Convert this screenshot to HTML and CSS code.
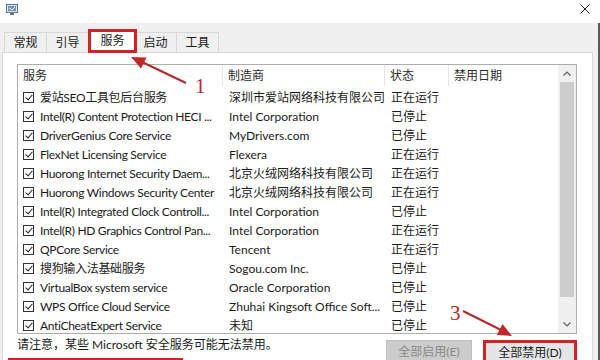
FILE: index.html
```html
<!DOCTYPE html>
<html lang="zh-CN">
<head>
<meta charset="utf-8">
<title>系统配置</title>
<link rel="stylesheet" href="styles.css">
</head>
<body>
<div class="window">
  <div class="titlebar">
    <svg class="appicon" width="12" height="11" viewBox="0 0 12 11">
      <rect x="0.5" y="0.5" width="11" height="8" fill="#dfe8f2" stroke="#5d7894"/>
      <rect x="2" y="2" width="8" height="5" fill="#6f93bd"/>
      <path d="M3 4 L6 6 L9 3" stroke="#ffffff" stroke-width="1" fill="none"/>
      <rect x="4" y="9" width="4" height="2" fill="#5d7894"/>
    </svg>
    <svg class="close" width="10" height="10" viewBox="0 0 10 10">
      <path d="M0.5 0.5 L9.5 9.5 M9.5 0.5 L0.5 9.5" stroke="#222" stroke-width="1"/>
    </svg>
  </div>
  <div class="frame">
    <div class="dialog">
      <div class="tabs">
        <div class="tab">常规</div>
        <div class="tab">引导</div>
        <div class="tab selected">服务</div>
        <div class="tab">启动</div>
        <div class="tab">工具</div>
      </div>
      <div class="panel">
        <div class="listview">
          <div class="lv-main">
            <div class="lv-head">
              <div class="col c1">服务</div>
              <div class="col c2">制造商</div>
              <div class="col c3">状态</div>
              <div class="col c4">禁用日期</div>
            </div>
            <div class="lv-body">
              <div class="row"><div class="cell c1"><span class="cb"></span><span class="txt">爱站SEO工具包后台服务</span></div><div class="cell c2">深圳市爱站网络科技有限公司</div><div class="cell c3">正在运行</div><div class="cell c4"></div></div>
              <div class="row"><div class="cell c1"><span class="cb"></span><span class="txt">Intel(R) Content Protection HECI ...</span></div><div class="cell c2">Intel Corporation</div><div class="cell c3">已停止</div><div class="cell c4"></div></div>
              <div class="row"><div class="cell c1"><span class="cb"></span><span class="txt">DriverGenius Core Service</span></div><div class="cell c2">MyDrivers.com</div><div class="cell c3">已停止</div><div class="cell c4"></div></div>
              <div class="row"><div class="cell c1"><span class="cb"></span><span class="txt">FlexNet Licensing Service</span></div><div class="cell c2">Flexera</div><div class="cell c3">正在运行</div><div class="cell c4"></div></div>
              <div class="row"><div class="cell c1"><span class="cb"></span><span class="txt">Huorong Internet Security Daem...</span></div><div class="cell c2">北京火绒网络科技有限公司</div><div class="cell c3">正在运行</div><div class="cell c4"></div></div>
              <div class="row"><div class="cell c1"><span class="cb"></span><span class="txt">Huorong Windows Security Center</span></div><div class="cell c2">北京火绒网络科技有限公司</div><div class="cell c3">正在运行</div><div class="cell c4"></div></div>
              <div class="row"><div class="cell c1"><span class="cb"></span><span class="txt">Intel(R) Integrated Clock Controll...</span></div><div class="cell c2">Intel Corporation</div><div class="cell c3">已停止</div><div class="cell c4"></div></div>
              <div class="row"><div class="cell c1"><span class="cb"></span><span class="txt">Intel(R) HD Graphics Control Pan...</span></div><div class="cell c2">Intel Corporation</div><div class="cell c3">正在运行</div><div class="cell c4"></div></div>
              <div class="row"><div class="cell c1"><span class="cb"></span><span class="txt">QPCore Service</span></div><div class="cell c2">Tencent</div><div class="cell c3">正在运行</div><div class="cell c4"></div></div>
              <div class="row"><div class="cell c1"><span class="cb"></span><span class="txt">搜狗输入法基础服务</span></div><div class="cell c2">Sogou.com Inc.</div><div class="cell c3">已停止</div><div class="cell c4"></div></div>
              <div class="row"><div class="cell c1"><span class="cb"></span><span class="txt">VirtualBox system service</span></div><div class="cell c2">Oracle Corporation</div><div class="cell c3">已停止</div><div class="cell c4"></div></div>
              <div class="row"><div class="cell c1"><span class="cb"></span><span class="txt">WPS Office Cloud Service</span></div><div class="cell c2">Zhuhai Kingsoft Office Soft...</div><div class="cell c3">已停止</div><div class="cell c4"></div></div>
              <div class="row"><div class="cell c1"><span class="cb"></span><span class="txt">AntiCheatExpert Service</span></div><div class="cell c2">未知</div><div class="cell c3">已停止</div><div class="cell c4"></div></div>
            </div>
          </div>
          <div class="scrollbar">
            <div class="sb-btn"><svg width="8" height="5" viewBox="0 0 8 5"><path d="M0.5 4.5 L4 1 L7.5 4.5" stroke="#606060" stroke-width="1.2" fill="none"/></svg></div>
            <div class="sb-track"><div class="sb-thumb"></div></div>
            <div class="sb-btn"><svg width="8" height="5" viewBox="0 0 8 5"><path d="M0.5 0.5 L4 4 L7.5 0.5" stroke="#606060" stroke-width="1.2" fill="none"/></svg></div>
          </div>
        </div>
        <div class="footer">
          <div class="footer-left">
            <div class="note">请注意，某些 Microsoft 安全服务可能无法禁用。</div>
            <div class="hidebox"></div>
          </div>
          <div class="buttons">
            <div class="btn disabled">全部启用(E)</div>
            <div class="hl"><div class="btn">全部禁用(D)</div></div>
          </div>
        </div>
      </div>
    </div>
  </div>
  <svg class="annot" width="600" height="360" viewBox="0 0 600 360">
    <line x1="186" y1="83" x2="142" y2="62" stroke="#b3282a" stroke-width="2"/>
    <polygon points="131,57 146.5,57.5 141,68.5" fill="#c0282a"/>
    <line x1="463" y1="311" x2="501" y2="330" stroke="#b3282a" stroke-width="2"/>
    <polygon points="512,336 496.8,335 502.5,324" fill="#c0282a"/>
  </svg>
  <div class="num n1">1</div>
  <div class="num n3">3</div>
</div>
</body>
</html>
```
FILE: styles.css
```css
* { box-sizing: border-box; }
html, body { margin: 0; padding: 0; }
body {
  width: 600px;
  height: 360px;
  overflow: hidden;
  background: #ffffff;
  font-family: Lato, "Noto Sans CJK SC", sans-serif;
  font-size: 12px;
  color: #1a1a1a;
}
.window {
  position: relative;
  width: 600px;
  height: 360px;
  display: flex;
  flex-direction: column;
  overflow: hidden;
}
.titlebar {
  height: 23px;
  flex: none;
  background: #ffffff;
  display: flex;
  align-items: flex-start;
  justify-content: space-between;
  padding: 4px 10px 0 6px;
}
.appicon { display: block; }
.close { display: block; }
.frame {
  flex: 1;
  display: flex;
  background: #f0f0f0;
  border-right: 2px solid #5a5a5a;
  padding-right: 5px;
}
.dialog {
  flex: 1;
  display: flex;
  flex-direction: column;
  padding-left: 2px;
}
.tabs {
  display: flex;
  height: 20px;
  margin-top: 9px;
  padding-left: 3px;
  position: relative;
  z-index: 1;
  align-items: flex-end;
}
.tab {
  width: 43px;
  height: 20px;
  line-height: 19px;
  text-align: center;
  background: #f0f0f0;
  border: 1px solid #d9d9d9;
  border-bottom: none;
  margin-left: -1px;
  color: #1a1a1a;
}
.tab.selected {
  width: 49px;
  height: 24px;
  margin: 0 -2px -1px -1px;
  background: #ffffff;
  border: 3px solid #d02424;
  line-height: 17px;
  position: relative;
  z-index: 2;
}
.panel {
  flex: 1;
  background: #ffffff;
  border: 1px solid #d9d9d9;
  border-bottom: none;
  padding: 11px 0 0 14px;
}
.listview {
  width: 560px;
  height: 270px;
  border: 1px solid #adadad;
  display: flex;
  overflow: hidden;
}
.lv-main {
  flex: 1;
  overflow: hidden;
}
.lv-head {
  display: flex;
  height: 21px;
  line-height: 21px;
  color: #2b2b2b;
}
.lv-head .col {
  padding-left: 5px;
  border-right: 1px solid #e5e5e5;
}
.lv-head .col.c4 { border-right: none; }
.c1 { width: 205px; flex: none; }
.c2 { width: 162px; flex: none; }
.c3 { width: 64px; flex: none; }
.c4 { flex: 1; }
.lv-body { padding-top: 2px; }
.row {
  display: flex;
  height: 19px;
  line-height: 19px;
}
.cell {
  white-space: nowrap;
  overflow: hidden;
  padding-left: 6px;
}
.cell.c1 {
  display: flex;
  align-items: center;
  padding-left: 5px;
}
.cb {
  width: 11px;
  height: 11px;
  flex: none;
  border: 1px solid #333333;
  margin-right: 6px;
  position: relative;
}
.cb::after {
  content: "";
  position: absolute;
  left: 3px;
  top: 0px;
  width: 3px;
  height: 6px;
  border-right: 1.2px solid #222;
  border-bottom: 1.2px solid #222;
  transform: rotate(40deg);
}
.txt {
  white-space: nowrap;
  letter-spacing: -0.32px;
}
.scrollbar {
  width: 18px;
  flex: none;
  background: #f0f0f0;
  display: flex;
  flex-direction: column;
}
.sb-btn {
  height: 17px;
  flex: none;
  display: flex;
  align-items: center;
  justify-content: center;
}
.sb-btn svg { display: block; }
.sb-track {
  flex: 1;
  padding: 0 2px;
}
.sb-thumb {
  height: 215px;
  background: #cdcdcd;
}
.footer {
  width: 560px;
  display: flex;
  justify-content: space-between;
  align-items: flex-start;
}
.footer-left {
  display: flex;
  flex-direction: column;
}
.note {
  margin-top: 3px;
  line-height: 16px;
  white-space: nowrap;
}
.hidebox {
  width: 175px;
  height: 24px;
  margin-left: -9px;
  margin-top: 5px;
  border: 3px solid #d02424;
}
.buttons {
  display: flex;
  align-items: flex-start;
  margin-top: 6px;
  gap: 11px;
}
.btn {
  height: 23px;
  line-height: 18px;
  text-align: center;
  border: 1px solid #adadad;
  background: #e1e1e1;
  white-space: nowrap;
}
.btn.disabled {
  width: 86px;
  padding-top: 2px;
  background: #cccccc;
  border-color: #bfbfbf;
  color: #8a8a8a;
}
.hl {
  width: 94px;
  height: 26px;
  border: 3px solid #d02424;
}
.hl .btn {
  width: 88px;
  border-color: #e1e1e1;
  background: #e5e5e5;
}
.annot {
  position: absolute;
  left: 0;
  top: 0;
  z-index: 5;
  pointer-events: none;
}
.num {
  position: absolute;
  z-index: 5;
  font-family: "Liberation Serif", serif;
  font-size: 21px;
  line-height: 21px;
  color: #b3282a;
}
.n1 { left: 195px; top: 76px; }
.n3 { left: 450px; top: 303px; }
```
